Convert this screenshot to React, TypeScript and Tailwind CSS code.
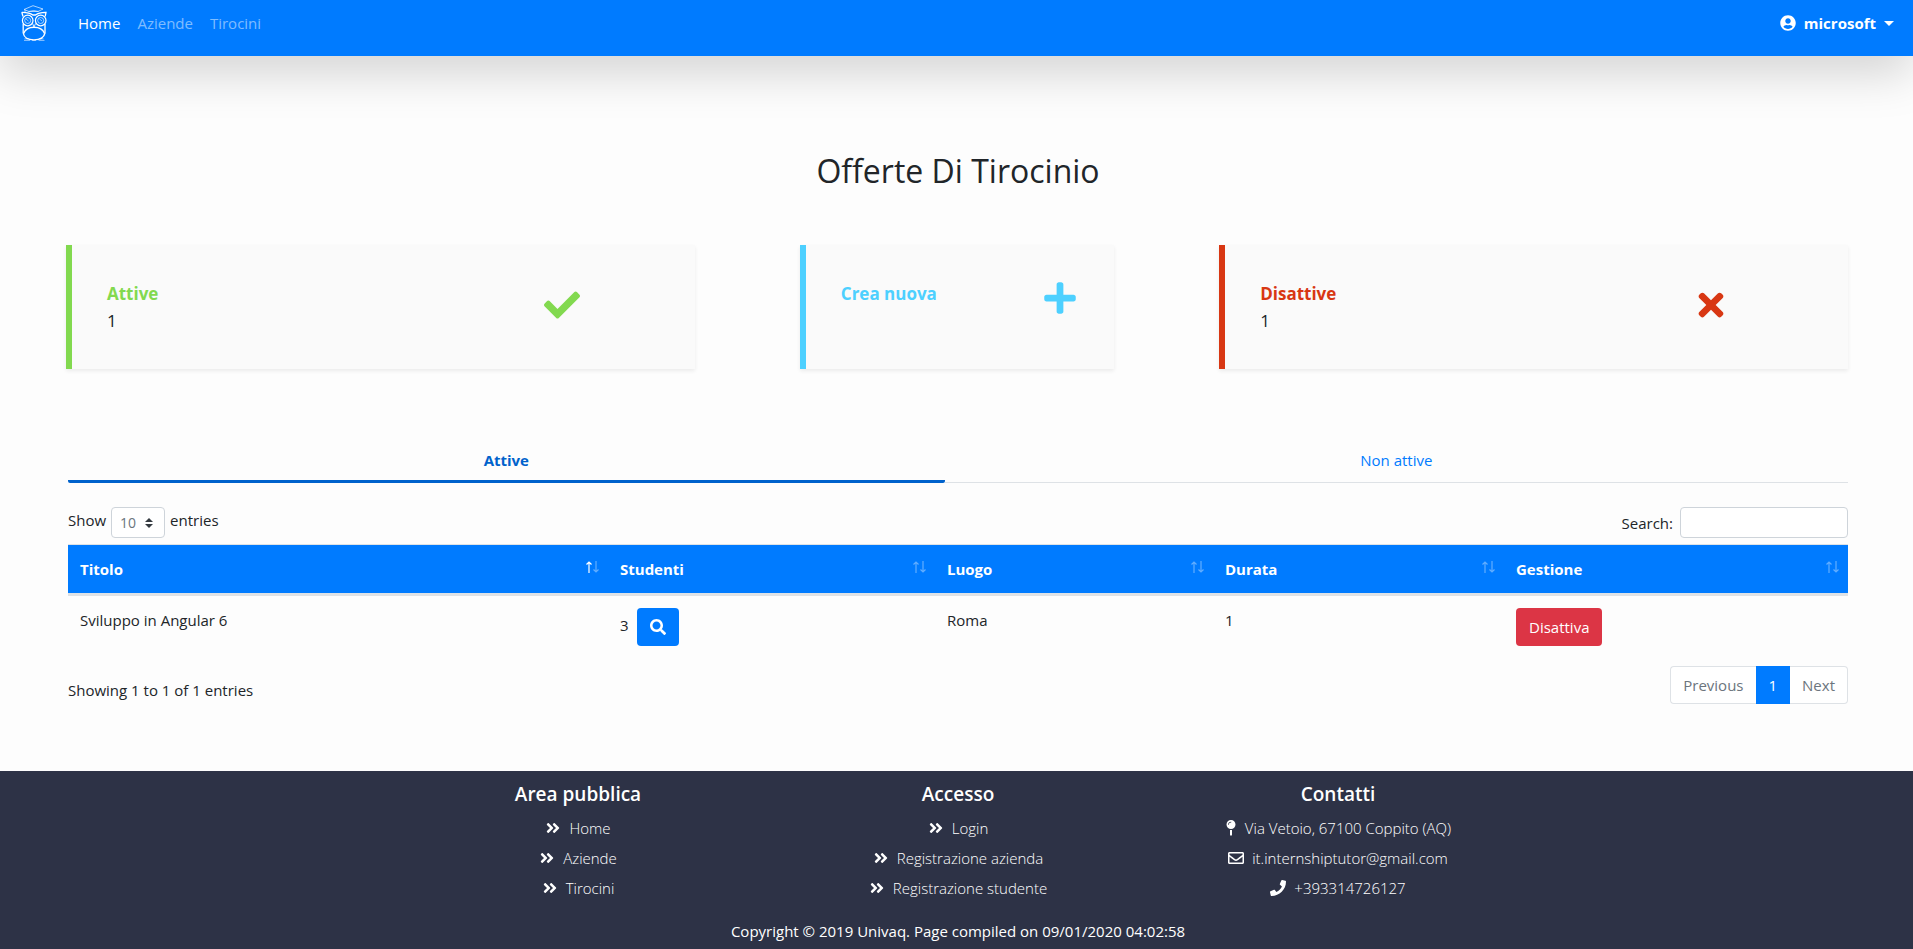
import type { ReactNode } from "react";
import {
  FaAngleDoubleRight,
  FaCheck,
  FaMapPin,
  FaPhone,
  FaPlus,
  FaRegEnvelope,
  FaSearch,
  FaTimes,
  FaUserCircle,
} from "react-icons/fa";

function OwlLogo() {
  return (
    <svg viewBox="0 0 26 36" className="h-9 w-[26px]" fill="none" stroke="#fff" strokeWidth="1" aria-hidden="true">
      <path d="M3 4.5 L12 .7 L22 4 L17 6.5 H8 Z" opacity=".65" />
      <path d="M4 4.5 V8 M7.5 6.5 Q13 4.5 17.5 6.5" opacity=".6" />
      <path d="M.8 7.3 C5 7.2 9.5 8.2 11.8 10 H14.5 C16.8 8.2 21 7.2 25 7.3 L24.2 11.5" strokeWidth="1.3" />
      <path d="M.8 7.3 L2 11.5" strokeWidth="1.3" />
      <circle cx="6.7" cy="15.5" r="5.3" strokeWidth="1.2" />
      <circle cx="19.7" cy="15.5" r="5.3" strokeWidth="1.2" />
      <circle cx="6.7" cy="15.5" r="3" opacity=".65" />
      <circle cx="19.7" cy="15.5" r="3" opacity=".65" />
      <path d="M5 14 L7.5 16 M18.5 14 L21 16" opacity=".6" />
      <path d="M11.6 18.5 L13 22 L14.6 18.5" opacity=".85" />
      <path d="M2.2 19 V28 C3 32.5 7.5 34.8 13 34.8 C18.5 34.8 23 32.5 24 28 V19" strokeWidth="1.3" />
      <path d="M2.6 28.5 C4 24.8 8 22.3 13 22.3 C18 22.3 22.2 24.8 23.6 28.5" strokeWidth="1.4" />
      <path d="M3.5 33.8 H7.5 M3 35.4 H9 M18.5 33.8 H22.5 M17.5 35.4 H23.5 M11 35.6 H15" opacity=".55" />
    </svg>
  );
}

function SortArrows({ active = false }: { active?: boolean }) {
  return (
    <svg viewBox="0 0 15 12" className="h-3 w-[15px] shrink-0" fill="none" stroke="#fff" strokeWidth="1.2" aria-hidden="true">
      <path d="M4 12 V1 M1.5 3.5 L4 1 L6.5 3.5" opacity={active ? 1 : 0.38} />
      <path d="M11 0 V11 M8.5 8.5 L11 11 L13.5 8.5" opacity={0.38} />
    </svg>
  );
}

type CardProps = {
  title: string;
  count?: number;
  border: string;
  color: string;
  iconPlace: string;
  icon: ReactNode;
};

function StatCard({ title, count, border, color, iconPlace, icon }: CardProps) {
  return (
    <a
      href="#"
      className={`block min-h-[124px] border-l-6 bg-[#fafafa] p-5 shadow-[0_2px_4px_rgba(0,0,0,0.075)] ${border}`}
    >
      <div className="grid grid-cols-4 pt-[15px]">
        <div className="col-span-3 px-[15px] text-[17px] leading-[27px]">
          <h2 className={`font-bold ${color}`}>{title}</h2>
          {count !== undefined && <p>{count}</p>}
        </div>
        <div className={`px-[15px] text-4xl ${color} ${iconPlace}`}>{icon}</div>
      </div>
    </a>
  );
}

const columns = [
  { name: "Titolo", width: "w-[540px]" },
  { name: "Studenti", width: "w-[327px]" },
  { name: "Luogo", width: "w-[278px]" },
  { name: "Durata", width: "w-[291px]" },
  { name: "Gestione", width: "w-[344px]" },
];

function FooterColumn({ title, children }: { title: string; children: ReactNode }) {
  return (
    <section className="flex flex-col items-center">
      <h3 className="mb-2.5 text-[19px] leading-6 font-semibold">{title}</h3>
      <ul className="flex flex-col items-center gap-1.5 font-light">{children}</ul>
    </section>
  );
}

function FooterLink({ icon, children }: { icon: ReactNode; children: ReactNode }) {
  return (
    <li>
      <a href="#" className="flex items-center gap-2">
        {icon}
        <span>{children}</span>
      </a>
    </li>
  );
}

const chevron = <FaAngleDoubleRight className="size-4" />;

export default function App() {
  return (
    <div className="flex min-h-screen flex-col bg-[#fdfdfd] font-['Open_Sans','Noto_Sans',sans-serif] text-[15px] leading-6 text-[#212529]">
      <header className="relative flex h-14 items-start justify-between bg-[#007bff] pr-[19px] pl-[21px] text-white shadow-[0_16px_48px_rgba(0,0,0,0.175)]">
        <nav className="flex items-start">
          <a href="#" aria-label="Univaq" className="mt-[5px] mr-[31px]">
            <OwlLogo />
          </a>
          <ul className="mt-[11px] flex gap-[17px]">
            <li><a href="#">Home</a></li>
            <li><a href="#" className="text-white/50">Aziende</a></li>
            <li><a href="#" className="text-white/50">Tirocini</a></li>
          </ul>
        </nav>
        <button type="button" className="mt-[11px] flex items-center font-bold">
          <FaUserCircle className="mr-2 size-4" />
          microsoft
          <svg viewBox="0 0 10 5" className="ml-2 h-[5px] w-[10px]" fill="currentColor" aria-hidden="true">
            <path d="M0 0 H10 L5 5 Z" />
          </svg>
        </button>
      </header>

      <main className="flex-1 pr-[65px] pb-[67px] pl-[68px]">
        <h1 className="mt-24 text-center text-[32px] leading-[38px] font-medium">Offerte Di Tirocinio</h1>

        <div className="-ml-0.5 mt-[55px] grid grid-cols-[2fr_1fr_2fr] gap-[105px]">
          <StatCard
            title="Attive"
            count={1}
            border="border-[#82d94f]"
            color="text-[#82d94f]"
            iconPlace="self-center pb-1"
            icon={<FaCheck />}
          />
          <StatCard
            title="Crea nuova"
            border="border-[#4dd0ff]"
            color="text-[#4dd0ff]"
            iconPlace="self-start"
            icon={<FaPlus />}
          />
          <StatCard
            title="Disattive"
            count={1}
            border="border-[#d83713]"
            color="text-[#d83713]"
            iconPlace="self-center pb-1"
            icon={<FaTimes className="-ml-1" />}
          />
        </div>

        <div role="tablist" className="mt-[71px] flex items-stretch">
          <button
            type="button"
            role="tab"
            aria-selected="true"
            className="flex-auto rounded-xs border-b-3 border-[#0062cc] px-4 py-2 font-bold text-[#0062cc]"
          >
            Attive
          </button>
          <button
            type="button"
            role="tab"
            aria-selected="false"
            className="flex-auto border-b border-[#dee2e6] px-4 pt-2 pb-2.5 text-[#007bff]"
          >
            Non attive
          </button>
        </div>

        <div className="mt-6 flex items-start justify-between">
          <label className="flex items-start gap-[5px] leading-[27px]">
            Show
            <span className="relative inline-flex">
              <select className="h-[31px] w-[54px] appearance-none rounded border border-[#ced4da] bg-white pl-2 text-sm text-[#6c757d]">
                <option>10</option>
                <option>25</option>
                <option>50</option>
                <option>100</option>
              </select>
              <svg
                viewBox="0 0 8 10"
                className="pointer-events-none absolute top-[11px] right-3 h-2.5 w-2"
                fill="#343a40"
                aria-hidden="true"
              >
                <path d="M4 0 L8 4 H0 Z M0 6 H8 L4 10 Z" />
              </svg>
            </span>
            entries
          </label>
          <label className="flex items-center gap-[7px]">
            Search:
            <input type="search" className="h-[31px] w-[168px] rounded border border-[#ced4da] bg-white px-2 text-sm" />
          </label>
        </div>

        <table className="mt-1.5 w-full table-fixed border-separate border-spacing-0 text-left">
          <thead>
            <tr className="bg-[#007bff] text-white">
              {columns.map((column, index) => (
                <th
                  key={column.name}
                  className={`border-t border-b-3 border-[#dee2e6] bg-clip-padding py-3 pr-2 pl-3 font-bold ${column.width}`}
                >
                  <span className="flex items-start justify-between">
                    {column.name}
                    <span className="pt-1">
                      <SortArrows active={index === 0} />
                    </span>
                  </span>
                </th>
              ))}
            </tr>
          </thead>
          <tbody>
            <tr className="align-top">
              <td className="p-3">Sviluppo in Angular 6</td>
              <td className="p-3">
                <div className="flex items-start gap-2 leading-[34px]">
                  3
                  <button
                    type="button"
                    aria-label="Mostra studenti"
                    className="flex h-[38px] w-[42px] items-center justify-center rounded bg-[#007bff] text-base text-white"
                  >
                    <FaSearch />
                  </button>
                </div>
              </td>
              <td className="p-3">Roma</td>
              <td className="p-3">1</td>
              <td className="p-3">
                <button type="button" className="block h-[38px] rounded bg-[#dc3545] px-[13px] text-white">
                  Disattiva
                </button>
              </td>
            </tr>
          </tbody>
        </table>

        <div className="mt-2 flex items-start justify-between">
          <p className="pt-3">Showing 1 to 1 of 1 entries</p>
          <nav aria-label="Pagine" className="flex h-[38px] text-[#6c757d]">
            <button type="button" className="rounded-l border border-r-0 border-[#dee2e6] bg-white px-3">
              Previous
            </button>
            <button type="button" aria-current="page" className="bg-[#007bff] px-[13px] text-white">
              1
            </button>
            <button type="button" className="rounded-r border border-l-0 border-[#dee2e6] bg-white px-3">
              Next
            </button>
          </nav>
        </div>
      </main>

      <footer className="bg-[#2d3246] pt-[11px] pl-[3px] text-white">
        <div className="mx-auto grid max-w-[1140px] grid-cols-3">
          <FooterColumn title="Area pubblica">
            <FooterLink icon={chevron}>Home</FooterLink>
            <FooterLink icon={chevron}>Aziende</FooterLink>
            <FooterLink icon={chevron}>Tirocini</FooterLink>
          </FooterColumn>
          <FooterColumn title="Accesso">
            <FooterLink icon={chevron}>Login</FooterLink>
            <FooterLink icon={chevron}>Registrazione azienda</FooterLink>
            <FooterLink icon={chevron}>Registrazione studente</FooterLink>
          </FooterColumn>
          <FooterColumn title="Contatti">
            <FooterLink icon={<FaMapPin className="h-4 w-3" />}>Via Vetoio, 67100 Coppito (AQ)</FooterLink>
            <FooterLink icon={<FaRegEnvelope className="size-4" />}>it.internshiptutor@gmail.com</FooterLink>
            <FooterLink icon={<FaPhone className="size-4" />}>+393314726127</FooterLink>
          </FooterColumn>
        </div>
        <p className="mt-[19px] pb-2.5 text-center leading-6">
          Copyright © 2019 Univaq. Page compiled on 09/01/2020 04:02:58
        </p>
      </footer>
    </div>
  );
}
